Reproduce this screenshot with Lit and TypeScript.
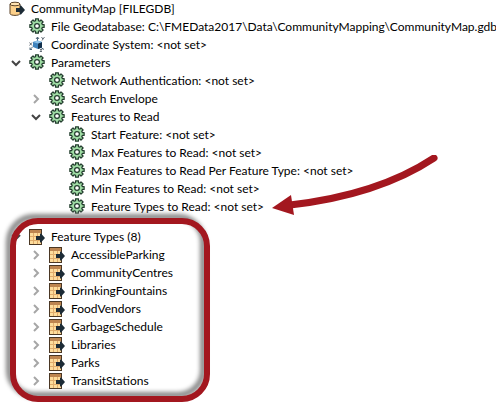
import { LitElement, html, css, svg, nothing } from "lit";
import { customElement } from "lit/decorators.js";

type Kind = "reader" | "gear" | "axes" | "table";
interface Node {
  label: string;
  kind: Kind;
  state?: "open" | "closed";
  children?: Node[];
}

const gear = (label: string, extra: Partial<Node> = {}): Node => ({ label, kind: "gear", ...extra });

const settings: Node[] = [
  gear("File Geodatabase: C:\\FMEData2017\\Data\\CommunityMapping\\CommunityMap.gdb"),
  { label: "Coordinate System: <not set>", kind: "axes" },
  gear("Parameters", {
    state: "open",
    children: [
      gear("Network Authentication: <not set>"),
      gear("Search Envelope", { state: "closed" }),
      gear("Features to Read", {
        state: "open",
        children: [
          gear("Start Feature: <not set>"),
          gear("Max Features to Read: <not set>"),
          gear("Max Features to Read Per Feature Type: <not set>"),
          gear("Min Features to Read: <not set>"),
          gear("Feature Types to Read: <not set>"),
        ],
      }),
    ],
  }),
];

const featureTypes: Node[] = [
  "AccessibleParking",
  "CommunityCentres",
  "DrinkingFountains",
  "FoodVendors",
  "GarbageSchedule",
  "Libraries",
  "Parks",
  "TransitStations",
].map((label) => ({ label, kind: "table", state: "closed" }));

// Outline of an eight-toothed wheel: each tooth has two outer and two root corners.
const wheel = Array.from({ length: 8 }, (_, i) =>
  [
    [-15, 5.5],
    [-12, 7.3],
    [12, 7.3],
    [15, 5.5],
  ].map(([offset, r]) => {
    const a = ((i * 45 + offset) * Math.PI) / 180;
    return `${(8 + r * Math.cos(a)).toFixed(2)} ${(8 + r * Math.sin(a)).toFixed(2)}`;
  })
).flat().join(" ");

const exportArrow = svg`<path d="M7 7h4V4.500h1L16 9l-4 4.500h-1V11H7z" fill="#1c2b36"/>`;

const icons = {
  gear: svg`
    <polygon points=${wheel} fill="#9fdca4" stroke="#223c2d" stroke-width="1.200" stroke-linejoin="round"/>
    <circle cx="8" cy="8" r="2.400" fill="#fff" stroke="#223c2d" stroke-width="1.200"/>`,
  reader: svg`
    <path d="M1 3v9.500c0 2.500 10 2.500 10 0V3z" fill="#fcd08a" stroke="#5b4328"/>
    <ellipse cx="6" cy="3" rx="5" ry="1.800" fill="#ffe2b0" stroke="#5b4328"/>${exportArrow}`,
  table: svg`
    <rect x="0.500" y="0.500" width="12" height="15" fill="#fddc9c" stroke="#4a3724"/>
    <path d="M1 1h11v3H1z" fill="#bd8550"/>
    <path d="M1 7.500h11M1 11.500h11M4.500 4v11M8.500 4v11" stroke="#e0ac6c" fill="none"/>${exportArrow}`,
  axes: svg`
    <path d="M8.500 5V1M7 3l1.500-2L10 3M4 10.500 1 13.500M1 11.500v2h2M12 11.500l3 2" stroke="#52697b" fill="none"/>
    <path d="M4 6l4.500-1.500L13 6v5.500L9 13l-5-2z" fill="#3f83bd"/>
    <path d="M9 7.500 13 6v5.500L9 13z" fill="#12304c"/>
    <path d="M4 6l4.500-1.500L13 6 9 7.500z" fill="#8fc2e8"/>
    <path d="M.5 6.500l2.500 3M3 6.500l-2.500 3M12.500 1l1.300 2M15.500 1l-2.500 3.500M11 13.500h2l-2 2h2" stroke="#45515c" stroke-width="0.800" fill="none"/>`,
};

@customElement("tree-row")
export class TreeRow extends LitElement {
  static properties = { node: { attribute: false } };
  declare node: Node;

  static styles = css`
    :host { display: flex; align-items: center; height: 18px; }
    .toggle { flex: none; width: 13px; height: 18px; margin-right: 7px; padding: 0; border: 0; background: none; display: grid; place-items: center; }
    .chevron { width: 10px; height: 10px; fill: none; stroke: #a6a6a6; stroke-width: 2; }
    .open { stroke: #444; transform: rotate(90deg); }
    .icon { flex: none; width: 16px; height: 16px; margin-right: 6px; }
    .gear, .axes { margin-bottom: 2px; }
    .label { white-space: nowrap; }
  `;

  render() {
    const { label, kind, state } = this.node;
    return html`
      ${kind === "reader"
        ? nothing
        : state
          ? html`<button class="toggle" aria-label="Toggle ${label}">
              <svg class="chevron ${state}" viewBox="0 0 10 10"><path d="M3 1l4 4-4 4" /></svg>
            </button>`
          : html`<span class="toggle"></span>`}
      <svg class="icon ${kind}" viewBox="0 0 16 16" aria-hidden="true">${icons[kind]}</svg>
      <span class="label">${label}</span>
    `;
  }
}

@customElement("app-root")
export class AppRoot extends LitElement {
  static styles = css`
    :host {
      display: block;
      position: relative;
      overflow: hidden;
      background: #fff;
      color: #000;
      font: 12px/18px Lato, "Noto Sans", sans-serif;
    }
    .tree { padding: 0 0 0 9px; }
    ul { list-style: none; margin: 0; padding: 0; }
    .branch { padding-left: 20px; }
    .types { position: relative; margin-top: 12px; padding-bottom: 13px; }
    .highlight {
      position: absolute;
      top: -10px;
      left: 1px;
      width: 188px;
      bottom: 1px;
      border: 6px solid #a3171f;
      border-radius: 28px;
      filter: drop-shadow(-4px -4px 2px #888);
      pointer-events: none;
    }
    .arrow { position: absolute; left: 272px; top: 155px; width: 166px; height: 62px; }
  `;

  private item(node: Node): unknown {
    return html`<li>
      <tree-row .node=${node}></tree-row>
      ${node.children ? html`<ul class="branch">${node.children.map((n) => this.item(n))}</ul>` : nothing}
    </li>`;
  }

  render() {
    return html`
      <main class="tree">
        <tree-row .node=${{ label: "CommunityMap [FILEGDB]", kind: "reader" }}></tree-row>
        <ul>${settings.map((n) => this.item(n))}</ul>
        <section class="types">
          <ul>${this.item({ label: "Feature Types (8)", kind: "table", state: "open", children: featureTypes })}</ul>
          <div class="highlight"></div>
        </section>
      </main>
      <svg class="arrow" viewBox="0 0 166 62" aria-hidden="true">
        <path d="M18 50Q106 40 162 3" fill="none" stroke="#a3171f" stroke-width="7" stroke-linecap="round" />
        <path d="M0 53 19 40 22 60z" fill="#a3171f" />
      </svg>
    `;
  }
}
